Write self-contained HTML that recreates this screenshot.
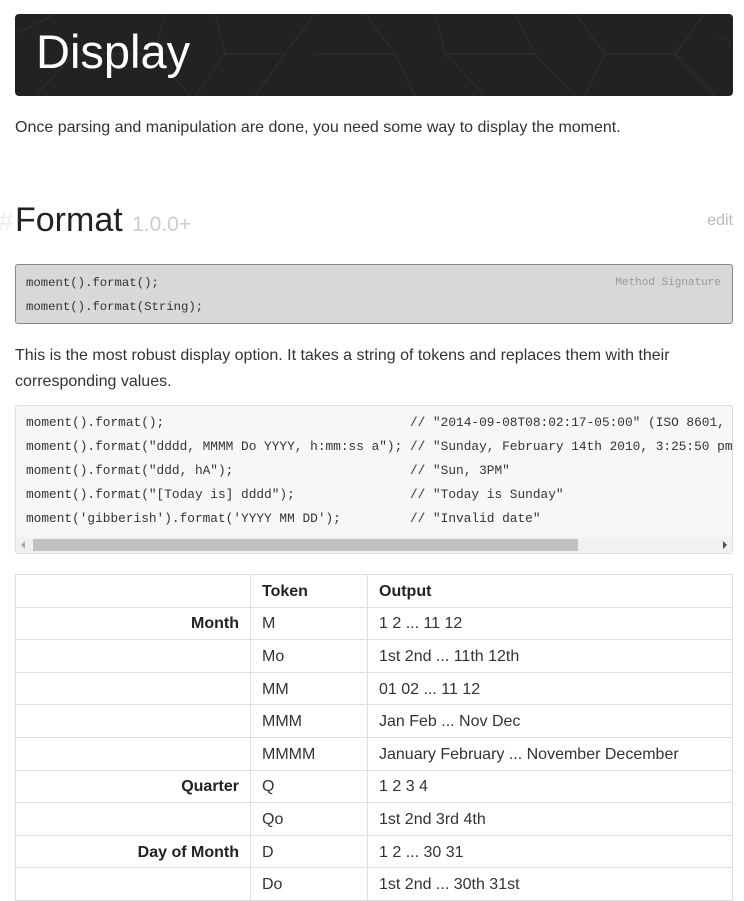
<!DOCTYPE html>
<html><head><meta charset="utf-8"><style>
*{box-sizing:border-box;margin:0;padding:0}
body{width:744px;height:901px;overflow:hidden;background:#fff;font-family:"Liberation Sans",Arial,sans-serif;color:#333;position:relative}
.banner{position:absolute;left:15px;top:14px;width:718px;height:82px;background:#222;border-radius:4px;overflow:hidden}
.banner h1{position:absolute;left:21px;top:10px;font-family:"Liberation Sans",sans-serif;font-weight:normal;font-size:47px;color:#fff}
.p{position:absolute;left:15px;font-size:16px;line-height:26px;color:#333}
.h2{position:absolute;left:15px;top:201px;font-family:"Liberation Sans",sans-serif;font-weight:normal;font-size:34px;color:#222}
.h2 .hash{position:absolute;left:-17px;top:4px;color:#eee;font-size:28px}
.h2 small{font-size:21px;color:#ccc}
.edit{position:absolute;right:11px;top:212px;font-size:16px;color:#bbb}
.sig{position:absolute;left:15px;top:264px;width:718px;height:60px;background:#d8d8d8;border:1px solid #888;border-radius:3px;padding:6px 10px;font-family:"Liberation Mono",monospace;font-size:12.3px;line-height:24px;color:#333}
.sig .ms{position:absolute;right:11px;top:6px;color:#999;font-size:11px}
.code{position:absolute;left:15px;top:405px;width:718px;height:149px;background:#f7f7f7;border:1px solid #ddd;border-radius:3px;overflow:hidden}
.code pre{position:absolute;left:10px;top:5px;font-family:"Liberation Mono",monospace;font-size:12.8px;line-height:24px;color:#333;white-space:pre}
.sb{position:absolute;left:0;bottom:0;width:716px;height:16px;background:#f1f1f1}
.sb .th{position:absolute;left:17px;top:2px;width:545px;height:12px;background:#c1c1c1}
.sb .l{position:absolute;left:5px;top:4px;border:4px solid transparent;border-right-color:#aaa;border-left:0}
.sb .r{position:absolute;right:5px;top:4px;border:4px solid transparent;border-left-color:#505050;border-right:0}
table{position:absolute;left:15px;top:574px;width:718px;border-collapse:collapse;font-size:16px}
td,th{border:1px solid #ddd;height:32.6px;padding:2px 11px 0;text-align:left;vertical-align:middle}
th{font-weight:bold;color:#222}
td:first-child{text-align:right;font-weight:bold;color:#222;width:235px}
td:nth-child(2){width:117px}
</style></head><body>
<div class="banner"><svg width="718" height="82" style="position:absolute;left:0;top:0" stroke="#2e2e2e" stroke-width="1.2" fill="none"><path d="M0 20 L40 0 M20 82 L60 40 L140 40 L150 0 M140 40 L175 82 M200 0 L210 40 L180 82 M210 40 L270 40 L300 0 M270 40 L240 82 M300 40 L380 40 L350 0 M380 40 L400 82 M420 0 L430 40 L470 82 M430 40 L520 40 L500 0 M520 40 L560 82 M560 0 L590 40 L660 40 L690 0 M590 40 L570 82 M660 40 L700 82 M700 20 L718 30"/></svg><h1>Display</h1></div>
<div class="p" style="top:115px">Once parsing and manipulation are done, you need some way to display the moment.</div>
<div class="h2"><span class="hash">#</span>Format <small>1.0.0+</small></div>
<div class="edit">edit</div>
<div class="sig">moment().format();<br>moment().format(String);<span class="ms">Method Signature</span></div>
<div class="p" style="top:343px">This is the most robust display option. It takes a string of tokens and replaces them with their<br>corresponding values.</div>
<div class="code"><pre>moment().format();                                // "2014-09-08T08:02:17-05:00" (ISO 8601, no fractional seconds)
moment().format("dddd, MMMM Do YYYY, h:mm:ss a"); // "Sunday, February 14th 2010, 3:25:50 pm"
moment().format("ddd, hA");                       // "Sun, 3PM"
moment().format("[Today is] dddd");               // "Today is Sunday"
moment('gibberish').format('YYYY MM DD');         // "Invalid date"</pre>
<div class="sb"><div class="l"></div><div class="th"></div><div class="r"></div></div></div>
<table>
<tr><th></th><th>Token</th><th>Output</th></tr>
<tr><td>Month</td><td>M</td><td>1 2 ... 11 12</td></tr>
<tr><td></td><td>Mo</td><td>1st 2nd ... 11th 12th</td></tr>
<tr><td></td><td>MM</td><td>01 02 ... 11 12</td></tr>
<tr><td></td><td>MMM</td><td>Jan Feb ... Nov Dec</td></tr>
<tr><td></td><td>MMMM</td><td>January February ... November December</td></tr>
<tr><td>Quarter</td><td>Q</td><td>1 2 3 4</td></tr>
<tr><td></td><td>Qo</td><td>1st 2nd 3rd 4th</td></tr>
<tr><td>Day of Month</td><td>D</td><td>1 2 ... 30 31</td></tr>
<tr><td></td><td>Do</td><td>1st 2nd ... 30th 31st</td></tr>
</table>
</body></html>
